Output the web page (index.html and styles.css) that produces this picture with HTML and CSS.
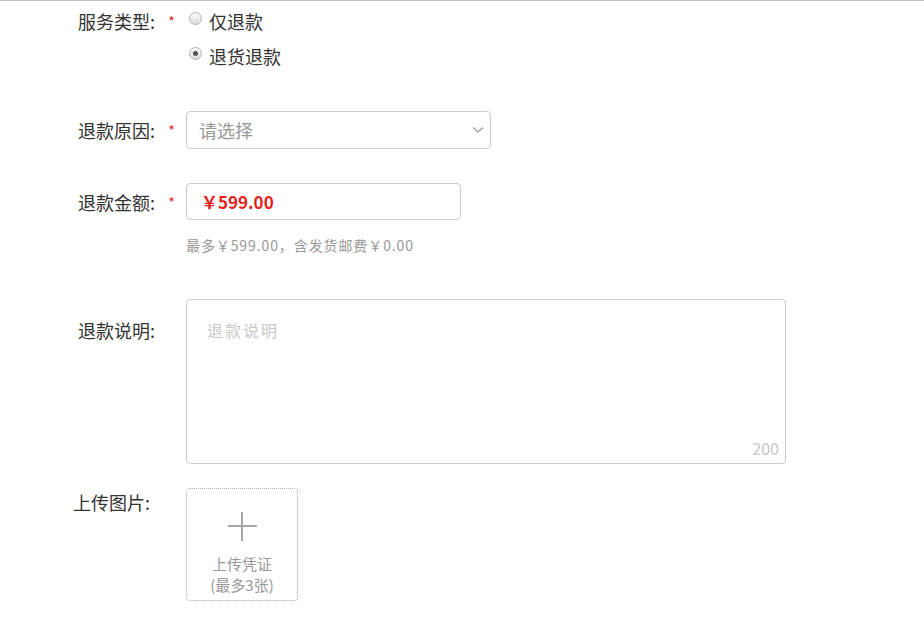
FILE: index.html
```html
<!DOCTYPE html>
<html lang="zh-CN">
<head>
<meta charset="utf-8">
<title>申请退款</title>
<link rel="stylesheet" href="styles.css">
</head>
<body>
<div class="form">
  <div class="row row-type">
    <div class="label">服务类型:</div>
    <div class="star">*</div>
    <div class="control radios">
      <label class="radio"><input type="radio" name="t"><span>仅退款</span></label>
      <label class="radio"><input type="radio" name="t" checked><span>退货退款</span></label>
    </div>
  </div>

  <div class="row row-reason">
    <div class="label">退款原因:</div>
    <div class="star">*</div>
    <div class="control">
      <div class="select">
        <span class="placeholder">请选择</span>
        <svg class="chevron" width="12" height="8" viewBox="0 0 12 8"><path d="M1 1.5 L6 6 L11 1.5" fill="none" stroke="#999" stroke-width="1.3"/></svg>
      </div>
    </div>
  </div>

  <div class="row row-amount">
    <div class="label">退款金额:</div>
    <div class="star">*</div>
    <div class="control">
      <div class="amount">￥599.00</div>
      <div class="hint">最多￥599.00，含发货邮费￥0.00</div>
    </div>
  </div>

  <div class="row row-desc">
    <div class="label">退款说明:</div>
    <div class="star"></div>
    <div class="control">
      <div class="textarea">
        <span class="ta-placeholder">退款说明</span>
        <span class="counter">200</span>
      </div>
    </div>
  </div>

  <div class="row row-upload">
    <div class="label label-upload">上传图片:</div>
    <div class="star"></div>
    <div class="control">
      <div class="upload">
        <div class="plus"></div>
        <div class="upload-text">上传凭证<br>(最多3张)</div>
      </div>
    </div>
  </div>
</div>
</body>
</html>
```

FILE: styles.css
```css
html, body {
  margin: 0;
  padding: 0;
  background: #fff;
}
body {
  font-family: "Noto Sans CJK SC", "Microsoft YaHei", "Noto Sans", sans-serif;
  color: #333;
  font-size: 16px;
  width: 924px;
  height: 617px;
  overflow: hidden;
}
.form {
  border-top: 1px solid #c2c2c2;
}
.row {
  display: flex;
  align-items: flex-start;
}
.label {
  width: 156px;
  text-align: right;
  font-size: 18px;
  line-height: 22px;
  color: #333;
  flex: none;
  box-sizing: border-box;
  padding-right: 1px;
}
.star {
  width: 30px;
  flex: none;
  text-align: center;
  color: #e2231a;
  font-size: 14px;
  line-height: 20px;
  padding-left: 1px;
  box-sizing: border-box;
}
.control {
  flex: none;
}

/* row 1 */
.row-type {
  padding-top: 2px;
}
.row-type .label {
  padding-top: 7px;
}
.row-type .star {
  padding-top: 8px;
}
.radios {
  display: flex;
  flex-direction: column;
}
.radio {
  display: flex;
  align-items: center;
  height: 35px;
  font-size: 18px;
  color: #333;
}
.radio input {
  appearance: none;
  -webkit-appearance: none;
  margin: 0 7px 0 3px;
  width: 13px;
  height: 13px;
  border-radius: 50%;
  border: 1px solid #b4b4b4;
  background: linear-gradient(#fcfcfc, #dcdcdc);
  box-sizing: border-box;
  position: relative;
  top: -2px;
}
.radio input:checked::after {
  content: "";
  position: absolute;
  left: 3px;
  top: 3px;
  width: 5px;
  height: 5px;
  border-radius: 50%;
  background: #555;
}

/* row 2 */
.row-reason {
  margin-top: 38px;
}
.row-reason .label {
  padding-top: 8px;
}
.row-reason .star {
  padding-top: 9px;
}
.select {
  width: 305px;
  height: 38px;
  box-sizing: border-box;
  border: 1px solid #ccc;
  border-radius: 4px;
  display: flex;
  align-items: center;
  justify-content: space-between;
  padding: 0 6px 0 12px;
}
.placeholder {
  color: #999;
  font-size: 18px;
}

/* row 3 */
.row-amount {
  margin-top: 34px;
}
.row-amount .label {
  padding-top: 8px;
}
.row-amount .star {
  padding-top: 9px;
}
.amount {
  width: 275px;
  height: 37px;
  box-sizing: border-box;
  border: 1px solid #ccc;
  border-radius: 4px;
  padding-left: 14px;
  line-height: 35px;
  color: #e2231a;
  font-weight: bold;
  font-size: 17px;
}
.hint {
  margin-top: 15px;
  font-size: 14px;
  letter-spacing: 0.9px;
  line-height: 20px;
  color: #999;
}

/* row 4 */
.row-desc {
  margin-top: 44px;
}
.row-desc .label {
  padding-top: 20px;
}
.textarea {
  width: 600px;
  height: 165px;
  box-sizing: border-box;
  border: 1px solid #ccc;
  border-radius: 4px;
  position: relative;
  padding: 20px 20px;
}
.ta-placeholder {
  display: block;
  color: #c8c8c8;
  font-size: 16px;
  line-height: 20px;
  letter-spacing: 2px;
}
.counter {
  position: absolute;
  right: 6px;
  bottom: 5px;
  font-size: 16px;
  line-height: 20px;
  color: #c8c8c8;
}

/* row 5 */
.row-upload {
  margin-top: 24px;
}
.label-upload {
  padding-top: 3px;
  padding-right: 6px;
  width: 156px;
}
.upload {
  width: 112px;
  height: 113px;
  box-sizing: border-box;
  border: 1px dotted #aaa;
  border-radius: 4px;
  display: flex;
  flex-direction: column;
  align-items: center;
  padding-top: 23px;
}
.plus {
  width: 29px;
  height: 29px;
  position: relative;
  flex: none;
}
.plus::before, .plus::after {
  content: "";
  position: absolute;
  background: #a6a6a6;
}
.plus::before {
  left: 0;
  right: 0;
  top: 13px;
  height: 2px;
}
.plus::after {
  top: 0;
  bottom: 0;
  left: 13px;
  width: 2px;
}
.upload-text {
  margin-top: 12px;
  font-size: 15px;
  line-height: 21px;
  color: #999;
  text-align: center;
}
```
